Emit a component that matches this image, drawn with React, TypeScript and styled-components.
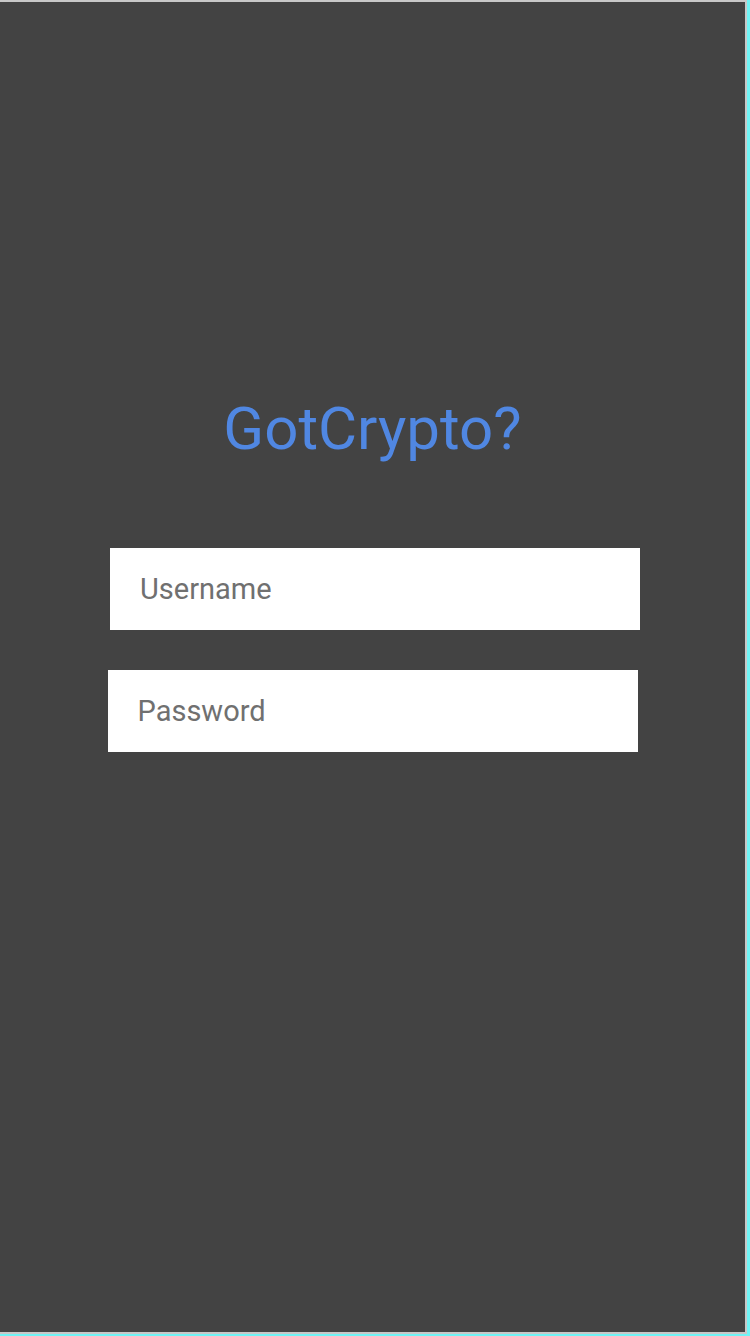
import React from "react";
import styled, { createGlobalStyle } from "styled-components";

const GlobalStyle = createGlobalStyle`
  html, body {
    margin: 0;
    padding: 0;
    background: #6ff3f5;
  }
  * {
    box-sizing: border-box;
  }
`;

const Frame = styled.div`
  width: 750px;
  height: 1336px;
  padding: 0 3px 2px 0;
  background: #6ff3f5;
`;

const Screen = styled.div`
  height: 100%;
  background: #434343;
  border-top: 2px solid #c8c8c8;
  border-right: 2px solid #c8c8c8;
  border-bottom: 2px solid #c8c8c8;
  display: flex;
  flex-direction: column;
  align-items: center;
  padding-top: 394px;
  font-family: Roboto, "Liberation Sans", sans-serif;
`;

const Title = styled.h1`
  margin: 0 0 86px;
  font-size: 60px;
  font-weight: 400;
  color: #5087e2;
  line-height: 66px;
`;

const Field = styled.input<{ $shift?: number }>`
  width: 530px;
  height: 82px;
  margin: 0 0 40px ${(p) => p.$shift ?? 0}px;
  padding: 0 0 0 30px;
  border: none;
  outline: none;
  background: #ffffff;
  font-family: Roboto, "Liberation Sans", sans-serif;
  font-size: 29px;
  color: #333;

  &::placeholder {
    color: #707070;
  }
`;

const App = () => {
  return (
    <>
      <GlobalStyle />
      <Frame>
        <Screen>
          <Title>GotCrypto?</Title>
          <Field $shift={5} placeholder="Username" />
          <Field type="password" placeholder="Password" />
        </Screen>
      </Frame>
    </>
  );
};

export default App;
